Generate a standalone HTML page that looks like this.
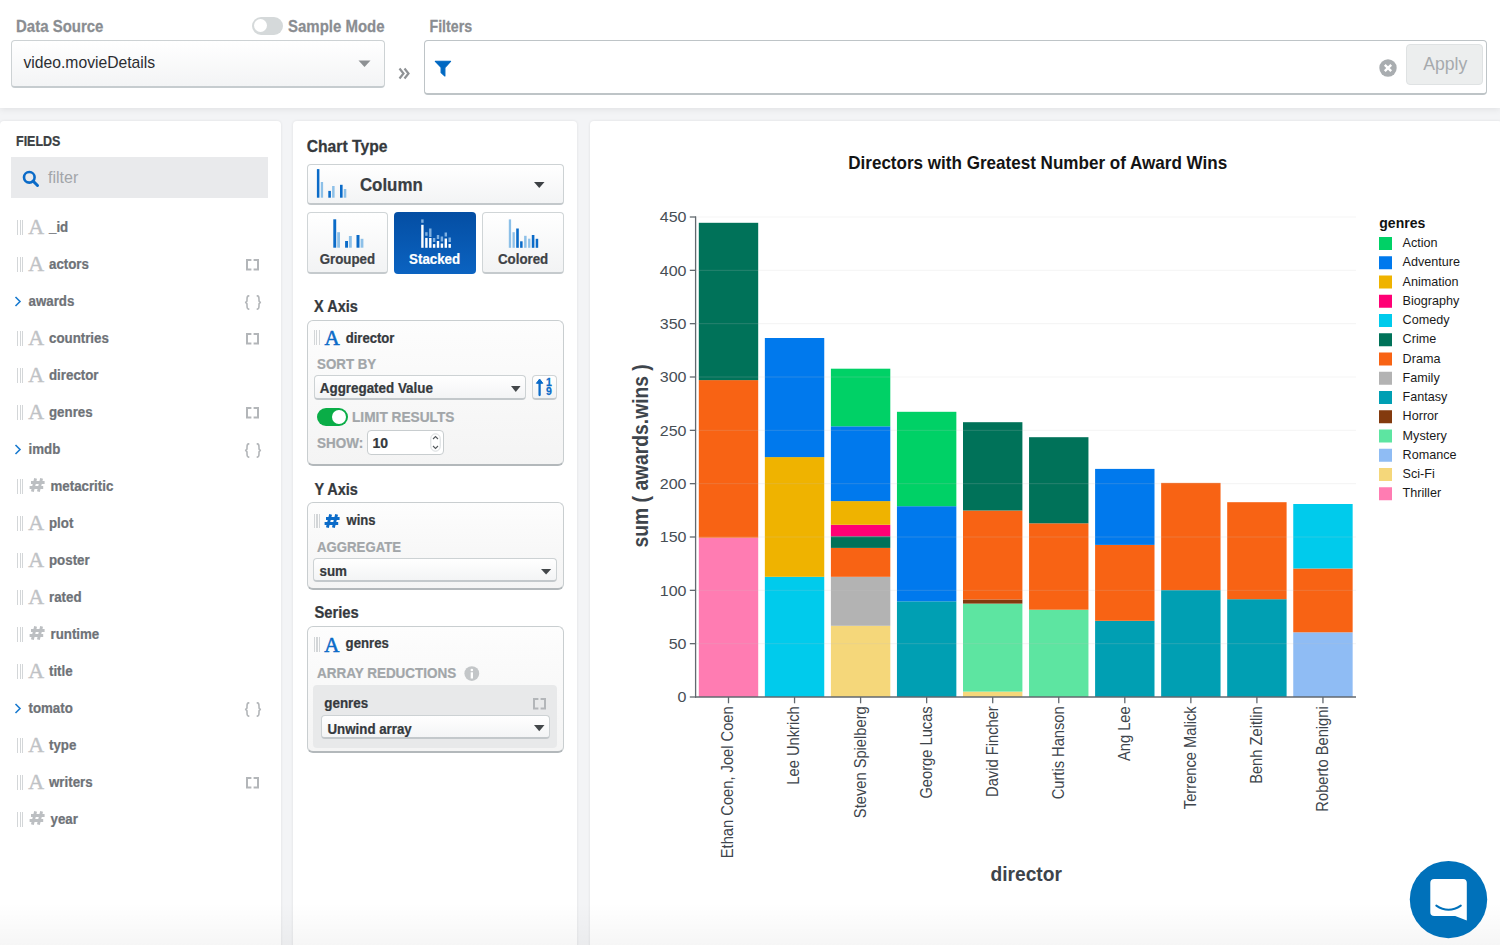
<!DOCTYPE html><html><head><meta charset="utf-8"><style>
*{box-sizing:border-box;margin:0;padding:0}
html,body{width:1500px;height:945px;overflow:hidden;background:#f3f4f6;font-family:"Liberation Sans",sans-serif}
.t{position:absolute;line-height:1;white-space:nowrap}
.a{position:absolute}
svg{position:absolute;overflow:visible}
</style></head><body>
<div class="a" style="left:0.00px;top:0.00px;width:1500.00px;height:108.00px;background:#fff;box-shadow:0 1px 7px rgba(0,0,0,0.09)"></div>
<div class="a" style="left:251.80px;top:16.60px;width:31.00px;height:18.30px;border-radius:9.2px;background:#d5d9da"></div>
<div class="a" style="left:254.00px;top:19.10px;width:13.30px;height:13.30px;border-radius:50%;background:#fff"></div>
<div class="a" style="left:11.00px;top:40.00px;width:374.00px;height:48.30px;border:1px solid #cdd2d4;border-bottom:2px solid #c6cccf;border-radius:4px;background:linear-gradient(#fff,#f3f4f5)"></div>
<svg style="left:358px;top:60px" width="13" height="8"><path d="M0.5 0.5 L12.5 0.5 L6.5 7 Z" fill="#8d9093"/></svg>
<svg style="left:398px;top:67px" width="13" height="13"><path d="M1.5 1.5 L5.5 6.5 L1.5 11.5 M6.5 1.5 L10.5 6.5 L6.5 11.5" fill="none" stroke="#8f9295" stroke-width="2.2"/></svg>
<div class="a" style="left:424.00px;top:40.00px;width:1063.00px;height:55.00px;border:1px solid #bec4c7;border-bottom-width:2px;border-radius:4px;background:#fff"></div>
<svg style="left:434px;top:60px" width="18" height="18"><path d="M1.3 1.3 H16.6 L10.9 7.6 V16 L7.1 12.6 V7.4 Z" fill="#0068c2" stroke="#0068c2" stroke-width="1.1" stroke-linejoin="round"/></svg>
<svg style="left:1379px;top:59px" width="18" height="18"><circle cx="9" cy="9" r="8.7" fill="#a9adb0"/><path d="M5.8 5.8 L12.2 12.2 M12.2 5.8 L5.8 12.2" stroke="#fff" stroke-width="2.4"/></svg>
<div class="a" style="left:1406.00px;top:44.00px;width:77.00px;height:40.80px;border:1px solid #dfe2e3;border-radius:4px;background:#eceeee"></div>
<div class="a" style="left:0.00px;top:121.00px;width:281.00px;height:840.00px;background:#fff;border-radius:4px;box-shadow:0 0 3px rgba(0,0,0,0.09)"></div>
<div class="a" style="left:293.00px;top:121.00px;width:284.00px;height:840.00px;background:#fff;border-radius:4px;box-shadow:0 0 3px rgba(0,0,0,0.09)"></div>
<div class="a" style="left:590.00px;top:121.00px;width:912.00px;height:840.00px;background:#fff;border-radius:4px;box-shadow:0 0 3px rgba(0,0,0,0.09)"></div>
<div class="a" style="left:10.80px;top:157.00px;width:257.20px;height:41.00px;background:#e9eaec"></div>
<svg style="left:22px;top:170px" width="18" height="18"><circle cx="7.3" cy="7.3" r="5.3" fill="none" stroke="#0b6bc8" stroke-width="2.6"/><path d="M11 11 L15.5 15.5" stroke="#0b6bc8" stroke-width="3" stroke-linecap="round"/></svg>
<div class="a" style="left:17.00px;top:220.40px;width:1.20px;height:14.60px;background:#d3d6d8"></div>
<div class="a" style="left:19.60px;top:220.40px;width:1.20px;height:14.60px;background:#d3d6d8"></div>
<div class="a" style="left:22.20px;top:220.40px;width:1.20px;height:14.60px;background:#d3d6d8"></div>
<div class="a" style="left:17.00px;top:257.40px;width:1.20px;height:14.60px;background:#d3d6d8"></div>
<div class="a" style="left:19.60px;top:257.40px;width:1.20px;height:14.60px;background:#d3d6d8"></div>
<div class="a" style="left:22.20px;top:257.40px;width:1.20px;height:14.60px;background:#d3d6d8"></div>
<svg style="left:246.2px;top:259.2px" width="14" height="12" viewBox="0 0 14 12"><path d="M5.4 1 H1 V10.4 H5.4 M7.6 1 H12 V10.4 H7.6" stroke="#b3b6b9" stroke-width="2" fill="none"/></svg>
<svg style="left:14px;top:296px" width="8" height="11"><path d="M1.5 1 L6 5.5 L1.5 10" stroke="#1a7bd0" stroke-width="1.6" fill="none"/></svg>
<svg style="left:244.2px;top:294.5px" width="18" height="15" viewBox="0 0 18 15"><path d="M5.3 0.9 H4.6 C3 0.9 3 2 3 4.2 V5.6 C3 6.8 2.4 7.4 1 7.5 C2.4 7.6 3 8.2 3 9.4 V10.8 C3 13 3 14.1 4.6 14.1 H5.3 M12.7 0.9 H13.4 C15 0.9 15 2 15 4.2 V5.6 C15 6.8 15.6 7.4 17 7.5 C15.6 7.6 15 8.2 15 9.4 V10.8 C15 13 15 14.1 13.4 14.1 H12.7" stroke="#b3b6b9" stroke-width="1.6" fill="none"/></svg>
<div class="a" style="left:17.00px;top:331.40px;width:1.20px;height:14.60px;background:#d3d6d8"></div>
<div class="a" style="left:19.60px;top:331.40px;width:1.20px;height:14.60px;background:#d3d6d8"></div>
<div class="a" style="left:22.20px;top:331.40px;width:1.20px;height:14.60px;background:#d3d6d8"></div>
<svg style="left:246.2px;top:333.2px" width="14" height="12" viewBox="0 0 14 12"><path d="M5.4 1 H1 V10.4 H5.4 M7.6 1 H12 V10.4 H7.6" stroke="#b3b6b9" stroke-width="2" fill="none"/></svg>
<div class="a" style="left:17.00px;top:368.40px;width:1.20px;height:14.60px;background:#d3d6d8"></div>
<div class="a" style="left:19.60px;top:368.40px;width:1.20px;height:14.60px;background:#d3d6d8"></div>
<div class="a" style="left:22.20px;top:368.40px;width:1.20px;height:14.60px;background:#d3d6d8"></div>
<div class="a" style="left:17.00px;top:405.40px;width:1.20px;height:14.60px;background:#d3d6d8"></div>
<div class="a" style="left:19.60px;top:405.40px;width:1.20px;height:14.60px;background:#d3d6d8"></div>
<div class="a" style="left:22.20px;top:405.40px;width:1.20px;height:14.60px;background:#d3d6d8"></div>
<svg style="left:246.2px;top:407.2px" width="14" height="12" viewBox="0 0 14 12"><path d="M5.4 1 H1 V10.4 H5.4 M7.6 1 H12 V10.4 H7.6" stroke="#b3b6b9" stroke-width="2" fill="none"/></svg>
<svg style="left:14px;top:444px" width="8" height="11"><path d="M1.5 1 L6 5.5 L1.5 10" stroke="#1a7bd0" stroke-width="1.6" fill="none"/></svg>
<svg style="left:244.2px;top:442.5px" width="18" height="15" viewBox="0 0 18 15"><path d="M5.3 0.9 H4.6 C3 0.9 3 2 3 4.2 V5.6 C3 6.8 2.4 7.4 1 7.5 C2.4 7.6 3 8.2 3 9.4 V10.8 C3 13 3 14.1 4.6 14.1 H5.3 M12.7 0.9 H13.4 C15 0.9 15 2 15 4.2 V5.6 C15 6.8 15.6 7.4 17 7.5 C15.6 7.6 15 8.2 15 9.4 V10.8 C15 13 15 14.1 13.4 14.1 H12.7" stroke="#b3b6b9" stroke-width="1.6" fill="none"/></svg>
<div class="a" style="left:17.00px;top:479.40px;width:1.20px;height:14.60px;background:#d3d6d8"></div>
<div class="a" style="left:19.60px;top:479.40px;width:1.20px;height:14.60px;background:#d3d6d8"></div>
<div class="a" style="left:22.20px;top:479.40px;width:1.20px;height:14.60px;background:#d3d6d8"></div>
<svg style="left:28.5px;top:478px" width="16" height="14" viewBox="0 0 16 14"><path d="M6.6 0.3 L3.4 13.7 M12.6 0.3 L9.4 13.7 M2 4.5 H15.6 M0.6 9.5 H14.2" stroke="#bcbfc2" stroke-width="2.9" fill="none"/></svg>
<div class="a" style="left:17.00px;top:516.40px;width:1.20px;height:14.60px;background:#d3d6d8"></div>
<div class="a" style="left:19.60px;top:516.40px;width:1.20px;height:14.60px;background:#d3d6d8"></div>
<div class="a" style="left:22.20px;top:516.40px;width:1.20px;height:14.60px;background:#d3d6d8"></div>
<div class="a" style="left:17.00px;top:553.40px;width:1.20px;height:14.60px;background:#d3d6d8"></div>
<div class="a" style="left:19.60px;top:553.40px;width:1.20px;height:14.60px;background:#d3d6d8"></div>
<div class="a" style="left:22.20px;top:553.40px;width:1.20px;height:14.60px;background:#d3d6d8"></div>
<div class="a" style="left:17.00px;top:590.40px;width:1.20px;height:14.60px;background:#d3d6d8"></div>
<div class="a" style="left:19.60px;top:590.40px;width:1.20px;height:14.60px;background:#d3d6d8"></div>
<div class="a" style="left:22.20px;top:590.40px;width:1.20px;height:14.60px;background:#d3d6d8"></div>
<div class="a" style="left:17.00px;top:627.40px;width:1.20px;height:14.60px;background:#d3d6d8"></div>
<div class="a" style="left:19.60px;top:627.40px;width:1.20px;height:14.60px;background:#d3d6d8"></div>
<div class="a" style="left:22.20px;top:627.40px;width:1.20px;height:14.60px;background:#d3d6d8"></div>
<svg style="left:28.5px;top:626px" width="16" height="14" viewBox="0 0 16 14"><path d="M6.6 0.3 L3.4 13.7 M12.6 0.3 L9.4 13.7 M2 4.5 H15.6 M0.6 9.5 H14.2" stroke="#bcbfc2" stroke-width="2.9" fill="none"/></svg>
<div class="a" style="left:17.00px;top:664.40px;width:1.20px;height:14.60px;background:#d3d6d8"></div>
<div class="a" style="left:19.60px;top:664.40px;width:1.20px;height:14.60px;background:#d3d6d8"></div>
<div class="a" style="left:22.20px;top:664.40px;width:1.20px;height:14.60px;background:#d3d6d8"></div>
<svg style="left:14px;top:703px" width="8" height="11"><path d="M1.5 1 L6 5.5 L1.5 10" stroke="#1a7bd0" stroke-width="1.6" fill="none"/></svg>
<svg style="left:244.2px;top:701.5px" width="18" height="15" viewBox="0 0 18 15"><path d="M5.3 0.9 H4.6 C3 0.9 3 2 3 4.2 V5.6 C3 6.8 2.4 7.4 1 7.5 C2.4 7.6 3 8.2 3 9.4 V10.8 C3 13 3 14.1 4.6 14.1 H5.3 M12.7 0.9 H13.4 C15 0.9 15 2 15 4.2 V5.6 C15 6.8 15.6 7.4 17 7.5 C15.6 7.6 15 8.2 15 9.4 V10.8 C15 13 15 14.1 13.4 14.1 H12.7" stroke="#b3b6b9" stroke-width="1.6" fill="none"/></svg>
<div class="a" style="left:17.00px;top:738.40px;width:1.20px;height:14.60px;background:#d3d6d8"></div>
<div class="a" style="left:19.60px;top:738.40px;width:1.20px;height:14.60px;background:#d3d6d8"></div>
<div class="a" style="left:22.20px;top:738.40px;width:1.20px;height:14.60px;background:#d3d6d8"></div>
<div class="a" style="left:17.00px;top:775.40px;width:1.20px;height:14.60px;background:#d3d6d8"></div>
<div class="a" style="left:19.60px;top:775.40px;width:1.20px;height:14.60px;background:#d3d6d8"></div>
<div class="a" style="left:22.20px;top:775.40px;width:1.20px;height:14.60px;background:#d3d6d8"></div>
<svg style="left:246.2px;top:777.2px" width="14" height="12" viewBox="0 0 14 12"><path d="M5.4 1 H1 V10.4 H5.4 M7.6 1 H12 V10.4 H7.6" stroke="#b3b6b9" stroke-width="2" fill="none"/></svg>
<div class="a" style="left:17.00px;top:812.40px;width:1.20px;height:14.60px;background:#d3d6d8"></div>
<div class="a" style="left:19.60px;top:812.40px;width:1.20px;height:14.60px;background:#d3d6d8"></div>
<div class="a" style="left:22.20px;top:812.40px;width:1.20px;height:14.60px;background:#d3d6d8"></div>
<svg style="left:28.5px;top:811px" width="16" height="14" viewBox="0 0 16 14"><path d="M6.6 0.3 L3.4 13.7 M12.6 0.3 L9.4 13.7 M2 4.5 H15.6 M0.6 9.5 H14.2" stroke="#bcbfc2" stroke-width="2.9" fill="none"/></svg>
<div class="a" style="left:307.00px;top:164.00px;width:257.00px;height:41.00px;border:1px solid #cdd2d4;border-bottom:2px solid #c3c8cb;border-radius:4px;background:linear-gradient(#fff,#f3f4f5)"></div>
<svg style="left:310px;top:165px" width="60" height="40"><rect x="6.90" y="4.10" width="2.50" height="28.60" fill="#0b6bc8"/><rect x="10.80" y="17.00" width="2.30" height="15.70" fill="#8dc0e8"/><rect x="18.30" y="25.90" width="2.60" height="6.80" fill="#0b6bc8"/><rect x="22.10" y="21.00" width="2.50" height="11.70" fill="#8dc0e8"/><rect x="30.00" y="19.80" width="2.60" height="12.90" fill="#0b6bc8"/><rect x="33.80" y="24.00" width="2.50" height="8.70" fill="#8dc0e8"/></svg>
<svg style="left:534px;top:182px" width="10.5" height="6" viewBox="0 0 10.5 6"><path d="M0 0 H10.5 L5.25 6 Z" fill="#3d4145"/></svg>
<div class="a" style="left:307.00px;top:212.00px;width:81.30px;height:61.80px;border:1px solid #d0d5d7;border-bottom:2px solid #c5cacd;border-radius:4px;background:linear-gradient(#fff,#f2f3f4)"></div>
<div class="a" style="left:394.00px;top:212.00px;width:82.00px;height:61.80px;border-radius:4px;background:linear-gradient(#044ea3,#0b63c1)"></div>
<div class="a" style="left:482.40px;top:212.00px;width:81.30px;height:61.80px;border:1px solid #d0d5d7;border-bottom:2px solid #c5cacd;border-radius:4px;background:linear-gradient(#fff,#f2f3f4)"></div>
<svg style="left:330px;top:215px" width="60" height="40"><rect x="3.30" y="4.30" width="2.90" height="28.40" fill="#0b6bc8"/><rect x="7.20" y="17.20" width="2.80" height="15.50" fill="#8dc0e8"/><rect x="15.10" y="26.00" width="2.90" height="6.70" fill="#0b6bc8"/><rect x="18.90" y="21.00" width="2.90" height="11.70" fill="#8dc0e8"/><rect x="26.50" y="20.00" width="3.00" height="12.70" fill="#0b6bc8"/><rect x="30.60" y="23.80" width="2.80" height="8.90" fill="#8dc0e8"/></svg>
<svg style="left:418px;top:215px" width="60" height="40"><rect x="3.20" y="9.80" width="2.40" height="23.00" fill="#ffffff"/><rect x="3.20" y="4.40" width="2.40" height="3.40" fill="#7fb0e0"/><rect x="7.20" y="22.90" width="2.40" height="9.90" fill="#ffffff"/><rect x="7.20" y="17.20" width="2.40" height="3.60" fill="#7fb0e0"/><rect x="11.10" y="23.00" width="2.40" height="9.80" fill="#ffffff"/><rect x="11.10" y="13.50" width="2.40" height="8.50" fill="#7fb0e0"/><rect x="14.90" y="29.10" width="2.40" height="3.70" fill="#ffffff"/><rect x="14.90" y="23.00" width="2.40" height="4.00" fill="#7fb0e0"/><rect x="18.80" y="26.00" width="2.40" height="6.80" fill="#ffffff"/><rect x="18.80" y="20.00" width="2.40" height="4.00" fill="#7fb0e0"/><rect x="22.70" y="28.50" width="2.40" height="4.30" fill="#ffffff"/><rect x="22.70" y="21.50" width="2.40" height="5.00" fill="#7fb0e0"/><rect x="26.60" y="23.50" width="2.40" height="9.30" fill="#ffffff"/><rect x="26.60" y="17.50" width="2.40" height="4.00" fill="#7fb0e0"/><rect x="30.50" y="29.00" width="2.40" height="3.80" fill="#ffffff"/><rect x="30.50" y="22.50" width="2.40" height="4.50" fill="#7fb0e0"/></svg>
<svg style="left:505px;top:215px" width="60" height="40"><rect x="3.80" y="4.40" width="2.30" height="28.40" fill="#8dc0e8"/><rect x="7.50" y="17.20" width="2.30" height="15.60" fill="#8dc0e8"/><rect x="11.20" y="13.50" width="2.60" height="19.30" fill="#0b6bc8"/><rect x="15.10" y="26.30" width="2.50" height="6.50" fill="#0b6bc8"/><rect x="19.10" y="20.80" width="2.50" height="12.00" fill="#8dc0e8"/><rect x="23.10" y="23.70" width="2.30" height="9.10" fill="#8dc0e8"/><rect x="26.80" y="20.00" width="2.60" height="12.80" fill="#0b6bc8"/><rect x="30.70" y="23.80" width="2.50" height="9.00" fill="#0b6bc8"/></svg>
<div class="a" style="left:307.00px;top:320.00px;width:256.70px;height:145.50px;border:1px solid #c9ced0;border-bottom:2.5px solid #b3b8bb;border-radius:6px;background:linear-gradient(#fdfdfd,#f4f4f4)"></div>
<div class="a" style="left:313.50px;top:330.40px;width:1.20px;height:14.60px;background:#d3d6d8"></div>
<div class="a" style="left:316.10px;top:330.40px;width:1.20px;height:14.60px;background:#d3d6d8"></div>
<div class="a" style="left:318.70px;top:330.40px;width:1.20px;height:14.60px;background:#d3d6d8"></div>
<div class="a" style="left:313.50px;top:375.00px;width:212.70px;height:25.00px;border:1px solid #cdd2d4;border-bottom:2px solid #c3c8cb;border-radius:4px;background:linear-gradient(#fff,#f3f4f5)"></div>
<svg style="left:510.6px;top:386px" width="9.6" height="5.9" viewBox="0 0 9.6 5.9"><path d="M0 0 H9.6 L4.8 5.9 Z" fill="#43474a"/></svg>
<div class="a" style="left:532.10px;top:375.00px;width:24.90px;height:25.00px;border:1px solid #cfd4d6;border-bottom:2px solid #c5cacd;border-radius:4px;background:linear-gradient(#fff,#f2f3f4)"></div>
<svg style="left:535px;top:378px" width="20" height="20"><path d="M4.6 17 V3.5" stroke="#0b6bc8" stroke-width="2.3" stroke-linecap="round"/><path d="M1.4 5.3 L4.6 1 L7.8 5.3 Z" fill="#0b6bc8" stroke="#0b6bc8" stroke-width="1" stroke-linejoin="round"/></svg>
<div class="a" style="left:316.50px;top:408.00px;width:31.50px;height:18.20px;border-radius:9.1px;background:#0aad47"></div>
<div class="a" style="left:331.80px;top:410.30px;width:13.80px;height:13.80px;border-radius:50%;background:#fff"></div>
<div class="a" style="left:367.20px;top:430.20px;width:76.60px;height:25.30px;border:1px solid #c8cdcf;border-radius:4px;background:#fff"></div>
<svg style="left:430px;top:433px" width="11" height="19"><rect x="0.8" y="0.8" width="9.4" height="17.4" rx="4.7" fill="#fff" stroke="#d6dadc" stroke-width="1"/><path d="M3 6 L5.5 3.5 L8 6 M3 13 L5.5 15.5 L8 13" stroke="#555a5e" stroke-width="1.1" fill="none"/></svg>
<div class="a" style="left:306.80px;top:502.40px;width:256.90px;height:87.20px;border:1px solid #c9ced0;border-bottom:2.5px solid #b3b8bb;border-radius:6px;background:linear-gradient(#fdfdfd,#f4f4f4)"></div>
<div class="a" style="left:313.80px;top:513.90px;width:1.20px;height:14.60px;background:#d3d6d8"></div>
<div class="a" style="left:316.40px;top:513.90px;width:1.20px;height:14.60px;background:#d3d6d8"></div>
<div class="a" style="left:319.00px;top:513.90px;width:1.20px;height:14.60px;background:#d3d6d8"></div>
<svg style="left:324.3px;top:513.8px" width="16" height="14" viewBox="0 0 16 14"><path d="M6.6 0.3 L3.4 13.7 M12.6 0.3 L9.4 13.7 M2 4.5 H15.6 M0.6 9.5 H14.2" stroke="#0b6bc8" stroke-width="2.9" fill="none"/></svg>
<div class="a" style="left:313.20px;top:557.90px;width:243.50px;height:24.30px;border:1px solid #cdd2d4;border-bottom:2px solid #c3c8cb;border-radius:4px;background:linear-gradient(#fff,#f3f4f5)"></div>
<svg style="left:540.8px;top:569px" width="10.2" height="5.5" viewBox="0 0 10.2 5.5"><path d="M0 0 H10.2 L5.1 5.5 Z" fill="#43474a"/></svg>
<div class="a" style="left:306.80px;top:626.20px;width:256.90px;height:127.30px;border:1px solid #c9ced0;border-bottom:2.5px solid #b3b8bb;border-radius:6px;background:linear-gradient(#fdfdfd,#f4f4f4)"></div>
<div class="a" style="left:313.80px;top:637.40px;width:1.20px;height:14.60px;background:#d3d6d8"></div>
<div class="a" style="left:316.40px;top:637.40px;width:1.20px;height:14.60px;background:#d3d6d8"></div>
<div class="a" style="left:319.00px;top:637.40px;width:1.20px;height:14.60px;background:#d3d6d8"></div>
<svg style="left:464px;top:665.5px" width="16" height="16"><circle cx="7.8" cy="7.6" r="7.4" fill="#c3c6c8"/><rect x="6.7" y="6.3" width="2.3" height="6.2" fill="#fff"/><circle cx="7.85" cy="4" r="1.3" fill="#fff"/></svg>
<div class="a" style="left:312.90px;top:685.20px;width:244.40px;height:62.60px;border-radius:4px;background:#e8e9ea"></div>
<svg style="left:533px;top:698.2px" width="14" height="12" viewBox="0 0 14 12"><path d="M5.4 1 H1 V10.4 H5.4 M7.6 1 H12 V10.4 H7.6" stroke="#b3b6b9" stroke-width="2" fill="none"/></svg>
<div class="a" style="left:321.10px;top:715.10px;width:228.60px;height:24.10px;border:1px solid #cdd2d4;border-bottom:2px solid #c3c8cb;border-radius:4px;background:linear-gradient(#fff,#f3f4f5)"></div>
<svg style="left:533.5px;top:725px" width="10.5" height="6.3" viewBox="0 0 10.5 6.3"><path d="M0 0 H10.5 L5.25 6.3 Z" fill="#43474a"/></svg>
<svg style="left:0;top:0;font-family:'Liberation Sans',sans-serif" width="1500" height="945"><rect x="698.80" y="537.70" width="59.4" height="159.30" fill="#ff7cb2"/><rect x="698.80" y="380.10" width="59.4" height="157.60" fill="#f86314"/><rect x="698.80" y="222.80" width="59.4" height="157.30" fill="#007259"/><rect x="764.85" y="576.80" width="59.4" height="120.20" fill="#00cbec"/><rect x="764.85" y="457.10" width="59.4" height="119.70" fill="#efb300"/><rect x="764.85" y="338.00" width="59.4" height="119.10" fill="#0079ed"/><rect x="830.90" y="625.80" width="59.4" height="71.20" fill="#f5d77a"/><rect x="830.90" y="576.80" width="59.4" height="49.00" fill="#b3b3b3"/><rect x="830.90" y="547.90" width="59.4" height="28.90" fill="#f86314"/><rect x="830.90" y="536.30" width="59.4" height="11.60" fill="#007259"/><rect x="830.90" y="524.80" width="59.4" height="11.50" fill="#ff0075"/><rect x="830.90" y="501.10" width="59.4" height="23.70" fill="#efb300"/><rect x="830.90" y="426.30" width="59.4" height="74.80" fill="#0079ed"/><rect x="830.90" y="368.70" width="59.4" height="57.60" fill="#00d166"/><rect x="896.95" y="601.30" width="59.4" height="95.70" fill="#009fb3"/><rect x="896.95" y="506.20" width="59.4" height="95.10" fill="#0079ed"/><rect x="896.95" y="411.80" width="59.4" height="94.40" fill="#00d166"/><rect x="963.00" y="691.60" width="59.4" height="5.40" fill="#f5d77a"/><rect x="963.00" y="603.60" width="59.4" height="88.00" fill="#5de5a1"/><rect x="963.00" y="599.50" width="59.4" height="4.10" fill="#833a0e"/><rect x="963.00" y="510.50" width="59.4" height="89.00" fill="#f86314"/><rect x="963.00" y="422.20" width="59.4" height="88.30" fill="#007259"/><rect x="1029.05" y="609.70" width="59.4" height="87.30" fill="#5de5a1"/><rect x="1029.05" y="523.30" width="59.4" height="86.40" fill="#f86314"/><rect x="1029.05" y="437.20" width="59.4" height="86.10" fill="#007259"/><rect x="1095.10" y="620.80" width="59.4" height="76.20" fill="#009fb3"/><rect x="1095.10" y="544.90" width="59.4" height="75.90" fill="#f86314"/><rect x="1095.10" y="468.90" width="59.4" height="76.00" fill="#0079ed"/><rect x="1161.15" y="590.10" width="59.4" height="106.90" fill="#009fb3"/><rect x="1161.15" y="482.90" width="59.4" height="107.20" fill="#f86314"/><rect x="1227.20" y="599.20" width="59.4" height="97.80" fill="#009fb3"/><rect x="1227.20" y="502.20" width="59.4" height="97.00" fill="#f86314"/><rect x="1293.25" y="632.30" width="59.4" height="64.70" fill="#8fbcf4"/><rect x="1293.25" y="568.50" width="59.4" height="63.80" fill="#f86314"/><rect x="1293.25" y="504.00" width="59.4" height="64.50" fill="#00cbec"/><line x1="696" y1="643.67" x2="1356" y2="643.67" stroke="#c8c8c8" stroke-opacity="0.2" stroke-width="1"/><line x1="696" y1="590.33" x2="1356" y2="590.33" stroke="#c8c8c8" stroke-opacity="0.2" stroke-width="1"/><line x1="696" y1="537.00" x2="1356" y2="537.00" stroke="#c8c8c8" stroke-opacity="0.2" stroke-width="1"/><line x1="696" y1="483.67" x2="1356" y2="483.67" stroke="#c8c8c8" stroke-opacity="0.2" stroke-width="1"/><line x1="696" y1="430.33" x2="1356" y2="430.33" stroke="#c8c8c8" stroke-opacity="0.2" stroke-width="1"/><line x1="696" y1="377.00" x2="1356" y2="377.00" stroke="#c8c8c8" stroke-opacity="0.2" stroke-width="1"/><line x1="696" y1="323.67" x2="1356" y2="323.67" stroke="#c8c8c8" stroke-opacity="0.2" stroke-width="1"/><line x1="696" y1="270.33" x2="1356" y2="270.33" stroke="#c8c8c8" stroke-opacity="0.2" stroke-width="1"/><line x1="696" y1="217.00" x2="1356" y2="217.00" stroke="#c8c8c8" stroke-opacity="0.2" stroke-width="1"/><line x1="695.6" y1="216.6" x2="695.6" y2="697.5" stroke="#62696f" stroke-width="1.3"/><line x1="695" y1="697" x2="1356" y2="697" stroke="#62696f" stroke-width="1.3"/><line x1="689.8" y1="697.00" x2="696" y2="697.00" stroke="#62696f" stroke-width="1.3"/><text transform="translate(686.5,702.40) scale(1.07,1)" text-anchor="end" font-size="15" fill="#474e55">0</text><line x1="689.8" y1="643.67" x2="696" y2="643.67" stroke="#62696f" stroke-width="1.3"/><text transform="translate(686.5,649.07) scale(1.07,1)" text-anchor="end" font-size="15" fill="#474e55">50</text><line x1="689.8" y1="590.33" x2="696" y2="590.33" stroke="#62696f" stroke-width="1.3"/><text transform="translate(686.5,595.73) scale(1.07,1)" text-anchor="end" font-size="15" fill="#474e55">100</text><line x1="689.8" y1="537.00" x2="696" y2="537.00" stroke="#62696f" stroke-width="1.3"/><text transform="translate(686.5,542.40) scale(1.07,1)" text-anchor="end" font-size="15" fill="#474e55">150</text><line x1="689.8" y1="483.67" x2="696" y2="483.67" stroke="#62696f" stroke-width="1.3"/><text transform="translate(686.5,489.07) scale(1.07,1)" text-anchor="end" font-size="15" fill="#474e55">200</text><line x1="689.8" y1="430.33" x2="696" y2="430.33" stroke="#62696f" stroke-width="1.3"/><text transform="translate(686.5,435.73) scale(1.07,1)" text-anchor="end" font-size="15" fill="#474e55">250</text><line x1="689.8" y1="377.00" x2="696" y2="377.00" stroke="#62696f" stroke-width="1.3"/><text transform="translate(686.5,382.40) scale(1.07,1)" text-anchor="end" font-size="15" fill="#474e55">300</text><line x1="689.8" y1="323.67" x2="696" y2="323.67" stroke="#62696f" stroke-width="1.3"/><text transform="translate(686.5,329.07) scale(1.07,1)" text-anchor="end" font-size="15" fill="#474e55">350</text><line x1="689.8" y1="270.33" x2="696" y2="270.33" stroke="#62696f" stroke-width="1.3"/><text transform="translate(686.5,275.73) scale(1.07,1)" text-anchor="end" font-size="15" fill="#474e55">400</text><line x1="689.8" y1="217.00" x2="696" y2="217.00" stroke="#62696f" stroke-width="1.3"/><text transform="translate(686.5,222.40) scale(1.07,1)" text-anchor="end" font-size="15" fill="#474e55">450</text><line x1="728.50" y1="697" x2="728.50" y2="703.3" stroke="#62696f" stroke-width="1.3"/><text transform="translate(733.40,706.3) rotate(-90) scale(0.93,1)" text-anchor="end" font-size="15.8" fill="#3e454c">Ethan Coen, Joel Coen</text><line x1="794.55" y1="697" x2="794.55" y2="703.3" stroke="#62696f" stroke-width="1.3"/><text transform="translate(799.45,706.3) rotate(-90) scale(0.93,1)" text-anchor="end" font-size="15.8" fill="#3e454c">Lee Unkrich</text><line x1="860.60" y1="697" x2="860.60" y2="703.3" stroke="#62696f" stroke-width="1.3"/><text transform="translate(865.50,706.3) rotate(-90) scale(0.93,1)" text-anchor="end" font-size="15.8" fill="#3e454c">Steven Spielberg</text><line x1="926.65" y1="697" x2="926.65" y2="703.3" stroke="#62696f" stroke-width="1.3"/><text transform="translate(931.55,706.3) rotate(-90) scale(0.93,1)" text-anchor="end" font-size="15.8" fill="#3e454c">George Lucas</text><line x1="992.70" y1="697" x2="992.70" y2="703.3" stroke="#62696f" stroke-width="1.3"/><text transform="translate(997.60,706.3) rotate(-90) scale(0.93,1)" text-anchor="end" font-size="15.8" fill="#3e454c">David Fincher</text><line x1="1058.75" y1="697" x2="1058.75" y2="703.3" stroke="#62696f" stroke-width="1.3"/><text transform="translate(1063.65,706.3) rotate(-90) scale(0.93,1)" text-anchor="end" font-size="15.8" fill="#3e454c">Curtis Hanson</text><line x1="1124.80" y1="697" x2="1124.80" y2="703.3" stroke="#62696f" stroke-width="1.3"/><text transform="translate(1129.70,706.3) rotate(-90) scale(0.93,1)" text-anchor="end" font-size="15.8" fill="#3e454c">Ang Lee</text><line x1="1190.85" y1="697" x2="1190.85" y2="703.3" stroke="#62696f" stroke-width="1.3"/><text transform="translate(1195.75,706.3) rotate(-90) scale(0.93,1)" text-anchor="end" font-size="15.8" fill="#3e454c">Terrence Malick</text><line x1="1256.90" y1="697" x2="1256.90" y2="703.3" stroke="#62696f" stroke-width="1.3"/><text transform="translate(1261.80,706.3) rotate(-90) scale(0.93,1)" text-anchor="end" font-size="15.8" fill="#3e454c">Benh Zeitlin</text><line x1="1322.95" y1="697" x2="1322.95" y2="703.3" stroke="#62696f" stroke-width="1.3"/><text transform="translate(1327.85,706.3) rotate(-90) scale(0.93,1)" text-anchor="end" font-size="15.8" fill="#3e454c">Roberto Benigni</text><text transform="translate(648.3,455.8) rotate(-90) scale(0.91,1)" text-anchor="middle" font-size="21.2" font-weight="bold" fill="#3e454c">sum ( awards.wins )</text><text transform="translate(1026.2,881) scale(0.91,1)" text-anchor="middle" font-size="21.1" font-weight="bold" fill="#3d444b">director</text><text transform="translate(848.2,168.8) scale(0.943,1)" font-size="18.1" font-weight="bold" fill="#141414">Directors with Greatest Number of Award Wins</text><text x="1379.3" y="227.8" font-size="14" font-weight="bold" fill="#111">genres</text><rect x="1379" y="237.00" width="13" height="13" fill="#00d166"/><text x="1402.6" y="247.00" font-size="12.6" fill="#1a1a1a">Action</text><rect x="1379" y="256.25" width="13" height="13" fill="#0079ed"/><text x="1402.6" y="266.25" font-size="12.6" fill="#1a1a1a">Adventure</text><rect x="1379" y="275.50" width="13" height="13" fill="#efb300"/><text x="1402.6" y="285.50" font-size="12.6" fill="#1a1a1a">Animation</text><rect x="1379" y="294.75" width="13" height="13" fill="#ff0075"/><text x="1402.6" y="304.75" font-size="12.6" fill="#1a1a1a">Biography</text><rect x="1379" y="314.00" width="13" height="13" fill="#00cbec"/><text x="1402.6" y="324.00" font-size="12.6" fill="#1a1a1a">Comedy</text><rect x="1379" y="333.25" width="13" height="13" fill="#007259"/><text x="1402.6" y="343.25" font-size="12.6" fill="#1a1a1a">Crime</text><rect x="1379" y="352.50" width="13" height="13" fill="#f86314"/><text x="1402.6" y="362.50" font-size="12.6" fill="#1a1a1a">Drama</text><rect x="1379" y="371.75" width="13" height="13" fill="#b3b3b3"/><text x="1402.6" y="381.75" font-size="12.6" fill="#1a1a1a">Family</text><rect x="1379" y="391.00" width="13" height="13" fill="#009fb3"/><text x="1402.6" y="401.00" font-size="12.6" fill="#1a1a1a">Fantasy</text><rect x="1379" y="410.25" width="13" height="13" fill="#833a0e"/><text x="1402.6" y="420.25" font-size="12.6" fill="#1a1a1a">Horror</text><rect x="1379" y="429.50" width="13" height="13" fill="#5de5a1"/><text x="1402.6" y="439.50" font-size="12.6" fill="#1a1a1a">Mystery</text><rect x="1379" y="448.75" width="13" height="13" fill="#8fbcf4"/><text x="1402.6" y="458.75" font-size="12.6" fill="#1a1a1a">Romance</text><rect x="1379" y="468.00" width="13" height="13" fill="#f5d77a"/><text x="1402.6" y="478.00" font-size="12.6" fill="#1a1a1a">Sci-Fi</text><rect x="1379" y="487.25" width="13" height="13" fill="#ff7cb2"/><text x="1402.6" y="497.25" font-size="12.6" fill="#1a1a1a">Thriller</text></svg>
<div class="a" style="left:0.00px;top:903.00px;width:1500.00px;height:42.00px;background:linear-gradient(rgba(0,0,0,0),rgba(0,0,0,0.035))"></div>
<svg style="left:1409px;top:860px" width="80" height="80"><circle cx="39.5" cy="39.6" r="38.7" fill="#0071ba"/><path d="M25.3 19 H54 Q57.8 19 57.8 22.8 V60.6 L46.2 56.1 H25.3 Q21.3 56.1 21.3 52.3 V22.8 Q21.3 19 25.3 19 Z" fill="#fff"/><path d="M27.3 45.6 Q39.5 54 51.8 45.6" stroke="#0071ba" stroke-width="2" fill="none" stroke-linecap="round"/></svg>
<svg style="left:0;top:0;font-family:'Liberation Sans',sans-serif" width="1500" height="945"><text transform="translate(16.00,31.70) scale(0.9091,1)" font-size="16.50" font-weight="bold" fill="#8a8d91" stroke="#8a8d91" stroke-width="0.25">Data Source</text><text transform="translate(288.00,31.70) scale(0.9091,1)" font-size="16.50" font-weight="bold" fill="#8a8d91" stroke="#8a8d91" stroke-width="0.25">Sample Mode</text><text transform="translate(429.50,31.70) scale(0.9091,1)" font-size="15.62" font-weight="bold" fill="#8a8d91" stroke="#8a8d91" stroke-width="0.25">Filters</text><text transform="translate(23.50,67.90)" font-size="15.70" font-weight="normal" fill="#2b2e32">video.movieDetails</text><text transform="translate(1423.30,69.90)" font-size="17.60" font-weight="normal" fill="#a6aaad">Apply</text><text transform="translate(16.00,145.80) scale(0.8850,1)" font-size="14.12" font-weight="bold" fill="#3b3f43" stroke="#3b3f43" stroke-width="0.25">FIELDS</text><text transform="translate(48.00,183.30)" font-size="16.00" font-weight="normal" fill="#a2a5a9">filter</text><text x="28.20" y="233.50" font-family="Liberation Serif" font-weight="normal" font-size="22" fill="#bfc2c5" stroke="#bfc2c5" stroke-width="0.4">A</text><text transform="translate(49.00,232.00) scale(0.8850,1)" font-size="15.03" font-weight="bold" fill="#6e7277" stroke="#6e7277" stroke-width="0.25">_id</text><text x="28.20" y="270.50" font-family="Liberation Serif" font-weight="normal" font-size="22" fill="#bfc2c5" stroke="#bfc2c5" stroke-width="0.4">A</text><text transform="translate(49.00,269.00) scale(0.8850,1)" font-size="15.03" font-weight="bold" fill="#6e7277" stroke="#6e7277" stroke-width="0.25">actors</text><text transform="translate(28.50,306.00) scale(0.8850,1)" font-size="15.03" font-weight="bold" fill="#6e7277" stroke="#6e7277" stroke-width="0.25">awards</text><text x="28.20" y="344.50" font-family="Liberation Serif" font-weight="normal" font-size="22" fill="#bfc2c5" stroke="#bfc2c5" stroke-width="0.4">A</text><text transform="translate(49.00,343.00) scale(0.8850,1)" font-size="15.03" font-weight="bold" fill="#6e7277" stroke="#6e7277" stroke-width="0.25">countries</text><text x="28.20" y="381.50" font-family="Liberation Serif" font-weight="normal" font-size="22" fill="#bfc2c5" stroke="#bfc2c5" stroke-width="0.4">A</text><text transform="translate(49.00,380.00) scale(0.8850,1)" font-size="15.03" font-weight="bold" fill="#6e7277" stroke="#6e7277" stroke-width="0.25">director</text><text x="28.20" y="418.50" font-family="Liberation Serif" font-weight="normal" font-size="22" fill="#bfc2c5" stroke="#bfc2c5" stroke-width="0.4">A</text><text transform="translate(49.00,417.00) scale(0.8850,1)" font-size="15.03" font-weight="bold" fill="#6e7277" stroke="#6e7277" stroke-width="0.25">genres</text><text transform="translate(28.50,454.00) scale(0.8850,1)" font-size="15.03" font-weight="bold" fill="#6e7277" stroke="#6e7277" stroke-width="0.25">imdb</text><text transform="translate(50.50,491.00) scale(0.8850,1)" font-size="15.03" font-weight="bold" fill="#6e7277" stroke="#6e7277" stroke-width="0.25">metacritic</text><text x="28.20" y="529.50" font-family="Liberation Serif" font-weight="normal" font-size="22" fill="#bfc2c5" stroke="#bfc2c5" stroke-width="0.4">A</text><text transform="translate(49.00,528.00) scale(0.8850,1)" font-size="15.03" font-weight="bold" fill="#6e7277" stroke="#6e7277" stroke-width="0.25">plot</text><text x="28.20" y="566.50" font-family="Liberation Serif" font-weight="normal" font-size="22" fill="#bfc2c5" stroke="#bfc2c5" stroke-width="0.4">A</text><text transform="translate(49.00,565.00) scale(0.8850,1)" font-size="15.03" font-weight="bold" fill="#6e7277" stroke="#6e7277" stroke-width="0.25">poster</text><text x="28.20" y="603.50" font-family="Liberation Serif" font-weight="normal" font-size="22" fill="#bfc2c5" stroke="#bfc2c5" stroke-width="0.4">A</text><text transform="translate(49.00,602.00) scale(0.8850,1)" font-size="15.03" font-weight="bold" fill="#6e7277" stroke="#6e7277" stroke-width="0.25">rated</text><text transform="translate(50.50,639.00) scale(0.8850,1)" font-size="15.03" font-weight="bold" fill="#6e7277" stroke="#6e7277" stroke-width="0.25">runtime</text><text x="28.20" y="677.50" font-family="Liberation Serif" font-weight="normal" font-size="22" fill="#bfc2c5" stroke="#bfc2c5" stroke-width="0.4">A</text><text transform="translate(49.00,676.00) scale(0.8850,1)" font-size="15.03" font-weight="bold" fill="#6e7277" stroke="#6e7277" stroke-width="0.25">title</text><text transform="translate(28.50,713.00) scale(0.8850,1)" font-size="15.03" font-weight="bold" fill="#6e7277" stroke="#6e7277" stroke-width="0.25">tomato</text><text x="28.20" y="751.50" font-family="Liberation Serif" font-weight="normal" font-size="22" fill="#bfc2c5" stroke="#bfc2c5" stroke-width="0.4">A</text><text transform="translate(49.00,750.00) scale(0.8850,1)" font-size="15.03" font-weight="bold" fill="#6e7277" stroke="#6e7277" stroke-width="0.25">type</text><text x="28.20" y="788.50" font-family="Liberation Serif" font-weight="normal" font-size="22" fill="#bfc2c5" stroke="#bfc2c5" stroke-width="0.4">A</text><text transform="translate(49.00,787.00) scale(0.8850,1)" font-size="15.03" font-weight="bold" fill="#6e7277" stroke="#6e7277" stroke-width="0.25">writers</text><text transform="translate(50.50,824.00) scale(0.8850,1)" font-size="15.03" font-weight="bold" fill="#6e7277" stroke="#6e7277" stroke-width="0.25">year</text><text transform="translate(306.70,152.00) scale(0.9259,1)" font-size="16.96" font-weight="bold" fill="#35393d" stroke="#35393d" stroke-width="0.25">Chart Type</text><text transform="translate(359.90,190.90) scale(0.9434,1)" font-size="17.91" font-weight="bold" fill="#3a3e42" stroke="#3a3e42" stroke-width="0.25">Column</text><text transform="translate(319.70,264.20) scale(0.8850,1)" font-size="15.03" font-weight="bold" fill="#3e4246" stroke="#3e4246" stroke-width="0.25">Grouped</text><text transform="translate(409.10,264.20) scale(0.8850,1)" font-size="15.03" font-weight="bold" fill="#ffffff" stroke="#ffffff" stroke-width="0.25">Stacked</text><text transform="translate(498.00,264.20) scale(0.8850,1)" font-size="15.03" font-weight="bold" fill="#3e4246" stroke="#3e4246" stroke-width="0.25">Colored</text><text transform="translate(314.10,311.70) scale(0.8850,1)" font-size="16.38" font-weight="bold" fill="#35393d" stroke="#35393d" stroke-width="0.25">X Axis</text><text x="324.60" y="344.60" font-family="Liberation Serif" font-weight="normal" font-size="21" fill="#0b6bc8" stroke="#0b6bc8" stroke-width="0.55">A</text><text transform="translate(345.70,342.70) scale(0.8850,1)" font-size="14.80" font-weight="bold" fill="#35393d" stroke="#35393d" stroke-width="0.25">director</text><text transform="translate(317.10,369.00) scale(0.8850,1)" font-size="15.03" font-weight="bold" fill="#a2a6a9" stroke="#a2a6a9" stroke-width="0.25">SORT BY</text><text transform="translate(319.80,393.00) scale(0.8850,1)" font-size="15.14" font-weight="bold" fill="#35393d" stroke="#35393d" stroke-width="0.25">Aggregated Value</text><text transform="translate(545.90,386.10) scale(0.9091,1)" font-size="11.55" font-weight="bold" fill="#0b6bc8" stroke="#0b6bc8" stroke-width="0.25">1</text><text transform="translate(545.90,395.40) scale(0.9091,1)" font-size="11.55" font-weight="bold" fill="#0b6bc8" stroke="#0b6bc8" stroke-width="0.25">9</text><text transform="translate(352.00,421.80) scale(0.8850,1)" font-size="15.48" font-weight="bold" fill="#a2a6a9" stroke="#a2a6a9" stroke-width="0.25">LIMIT RESULTS</text><text transform="translate(317.00,447.80) scale(0.8850,1)" font-size="15.25" font-weight="bold" fill="#a2a6a9" stroke="#a2a6a9" stroke-width="0.25">SHOW:</text><text transform="translate(372.50,447.80) scale(0.9804,1)" font-size="14.28" font-weight="bold" fill="#35393d" stroke="#35393d" stroke-width="0.25">10</text><text transform="translate(314.40,494.80) scale(0.8850,1)" font-size="16.38" font-weight="bold" fill="#35393d" stroke="#35393d" stroke-width="0.25">Y Axis</text><text transform="translate(346.50,524.90) scale(0.8850,1)" font-size="14.80" font-weight="bold" fill="#35393d" stroke="#35393d" stroke-width="0.25">wins</text><text transform="translate(317.00,551.90) scale(0.8850,1)" font-size="14.92" font-weight="bold" fill="#a2a6a9" stroke="#a2a6a9" stroke-width="0.25">AGGREGATE</text><text transform="translate(319.50,576.30) scale(0.8850,1)" font-size="15.14" font-weight="bold" fill="#35393d" stroke="#35393d" stroke-width="0.25">sum</text><text transform="translate(314.40,618.30) scale(0.8850,1)" font-size="16.72" font-weight="bold" fill="#35393d" stroke="#35393d" stroke-width="0.25">Series</text><text x="324.30" y="651.50" font-family="Liberation Serif" font-weight="normal" font-size="21" fill="#0b6bc8" stroke="#0b6bc8" stroke-width="0.55">A</text><text transform="translate(345.60,648.40) scale(0.8850,1)" font-size="14.92" font-weight="bold" fill="#35393d" stroke="#35393d" stroke-width="0.25">genres</text><text transform="translate(317.00,677.90) scale(0.8850,1)" font-size="15.25" font-weight="bold" fill="#a2a6a9" stroke="#a2a6a9" stroke-width="0.25">ARRAY REDUCTIONS</text><text transform="translate(324.30,708.10) scale(0.8850,1)" font-size="15.14" font-weight="bold" fill="#35393d" stroke="#35393d" stroke-width="0.25">genres</text><text transform="translate(327.50,733.50) scale(0.8850,1)" font-size="15.03" font-weight="bold" fill="#35393d" stroke="#35393d" stroke-width="0.25">Unwind array</text></svg>
</body></html>
